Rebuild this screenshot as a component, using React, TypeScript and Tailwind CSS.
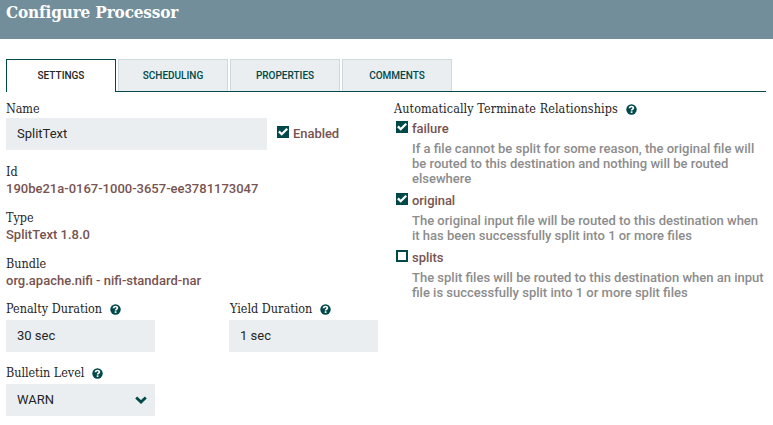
import React from 'react';

const slab = "font-['Roboto_Slab','DejaVu_Serif_Condensed','DejaVu_Serif',serif]";

function Help() {
  return (
    <svg className="ml-2 h-[11px] w-[11px] shrink-0" viewBox="0 0 11 11">
      <circle cx="5.5" cy="5.5" r="5.2" fill="#004849" />
      <path d="M3.5 4.3C3.6 1.9 7.4 2 7.4 4.1C7.4 5.4 5.6 5.2 5.6 6.6" fill="none" stroke="#fff" strokeWidth="1.7" />
      <rect x="4.7" y="7.3" width="1.8" height="1.6" fill="#fff" />
    </svg>
  );
}

function Label({ text, tracking, help }: { text: string; tracking: string; help?: boolean }) {
  return (
    <div className={`flex h-[18px] items-center whitespace-nowrap text-[12.5px] leading-[18px] text-[#262626] ${slab}`}>
      <span className={tracking}>{text}</span>
      {help && <Help />}
    </div>
  );
}

function Check({ on }: { on?: boolean }) {
  return (
    <svg className="h-3 w-3 shrink-0" viewBox="0 0 12 12">
      {on ? (
        <>
          <rect width="12" height="12" fill="#004849" />
          <path d="M1.9 5.4L4.7 8.2L10.2 2.7" fill="none" stroke="#fff" strokeWidth="2.3" />
        </>
      ) : (
        <rect x="1" y="1" width="10" height="10" fill="#fff" stroke="#004849" strokeWidth="2" />
      )}
    </svg>
  );
}

function Field({ value, width, arrow }: { value: string; width: string; arrow?: boolean }) {
  return (
    <div className={`flex h-8 items-center justify-between bg-[#eaeef0] pr-2 pl-[11px] text-[13px] text-[#262626] ${width}`}>
      <span>{value}</span>
      {arrow && (
        <svg className="h-[8px] w-[12px]" viewBox="0 0 12 8">
          <path d="M1.2 1.4L6 6L10.8 1.4" fill="none" stroke="#004849" strokeWidth="2.8" />
        </svg>
      )}
    </div>
  );
}

function Detail({ label, value, tracking }: { label: string; value: string; tracking: string }) {
  return (
    <div className="h-[46px]">
      <Label text={label} tracking={tracking} />
      <div className="h-4 whitespace-nowrap text-[13px] leading-4 font-medium text-[#775351]">{value}</div>
    </div>
  );
}

function Tab({ name, active }: { name: string; active?: boolean }) {
  return (
    <div
      className={`flex w-[110px] items-center justify-center border border-b-0 text-[10px] font-medium ${
        active ? 'h-[33px] border-[#004849] bg-white pb-px text-[#262626]' : 'h-8 border-[#ccdadb] bg-[#eaeef0] text-[#004849]'
      }`}
    >
      {name}
    </div>
  );
}

function Relationship({ name, lines, on }: { name: string; lines: string[]; on?: boolean }) {
  return (
    <div className="mb-[7px] whitespace-nowrap text-[13px] font-medium">
      <div className="flex h-5 items-start pl-[2px]">
        <Check on={on} />
        <span className="ml-1 leading-4 tracking-[-0.05px] text-[#775351]">{name}</span>
      </div>
      {lines.map((line) => (
        <div key={line} className="h-[15px] pl-[18px] leading-[15px] text-[#8c8c8c]">{line}</div>
      ))}
    </div>
  );
}

export default function App() {
  return (
    <div className="h-[425px] w-[773px] overflow-hidden bg-white font-['Roboto',sans-serif]">
      <header className={`h-[39px] bg-[#728e9b] pl-[6px] text-[17px] leading-6 font-bold whitespace-nowrap text-white ${slab}`}>
        <span className="tracking-[-0.15px]">Configure Processor</span>
      </header>
      <nav className="mt-5 mr-[7px] ml-[6px] flex h-[33px] gap-[2px] bg-[linear-gradient(#004849,#004849)] bg-[length:100%_1px] bg-bottom bg-no-repeat">
        <Tab name="SETTINGS" active />
        <Tab name="SCHEDULING" />
        <Tab name="PROPERTIES" />
        <Tab name="COMMENTS" />
      </nav>
      <main className="flex pt-2 pl-[6px]">
        <section className="w-[388px]">
          <Label text="Name" tracking="tracking-[-0.1px]" />
          <div className="flex">
            <Field value="SplitText" width="w-[261px]" />
            <div className="ml-[10px] flex pt-2 text-[13px] font-medium text-[#775351]">
              <Check on />
              <span className="ml-1 leading-4 tracking-[-0.05px]">Enabled</span>
            </div>
          </div>
          <div className="pt-[13px]">
            <Detail label="Id" value="190be21a-0167-1000-3657-ee3781173047" tracking="tracking-[0px]" />
            <Detail label="Type" value="SplitText 1.8.0" tracking="tracking-[0px]" />
            <Detail label="Bundle" value="org.apache.nifi - nifi-standard-nar" tracking="tracking-[0px]" />
          </div>
          <div className="-mt-px flex gap-[74px]">
            <div>
              <Label text="Penalty Duration" tracking="tracking-[0px]" help />
              <div className="pt-[2px]"><Field value="30 sec" width="w-[149px]" /></div>
            </div>
            <div>
              <div className="pl-px">
                <Label text="Yield Duration" tracking="tracking-[0px]" help />
              </div>
              <div className="pt-[2px]"><Field value="1 sec" width="w-[149px]" /></div>
            </div>
          </div>
          <div className="pt-3">
            <Label text="Bulletin Level" tracking="tracking-[-0.05px]" help />
            <div className="pt-[2px]"><Field value="WARN" width="w-[149px]" arrow /></div>
          </div>
        </section>
        <section>
          <Label text="Automatically Terminate Relationships" tracking="tracking-[0.08px]" help />
          <div className="pt-[3px]">
            <Relationship
              name="failure"
              on
              lines={[
                'If a file cannot be split for some reason, the original file will',
                'be routed to this destination and nothing will be routed',
                'elsewhere',
              ]}
            />
            <Relationship
              name="original"
              on
              lines={['The original input file will be routed to this destination when', 'it has been successfully split into 1 or more files']}
            />
            <Relationship
              name="splits"
              lines={['The split files will be routed to this destination when an input', 'file is successfully split into 1 or more split files']}
            />
          </div>
        </section>
      </main>
    </div>
  );
}
